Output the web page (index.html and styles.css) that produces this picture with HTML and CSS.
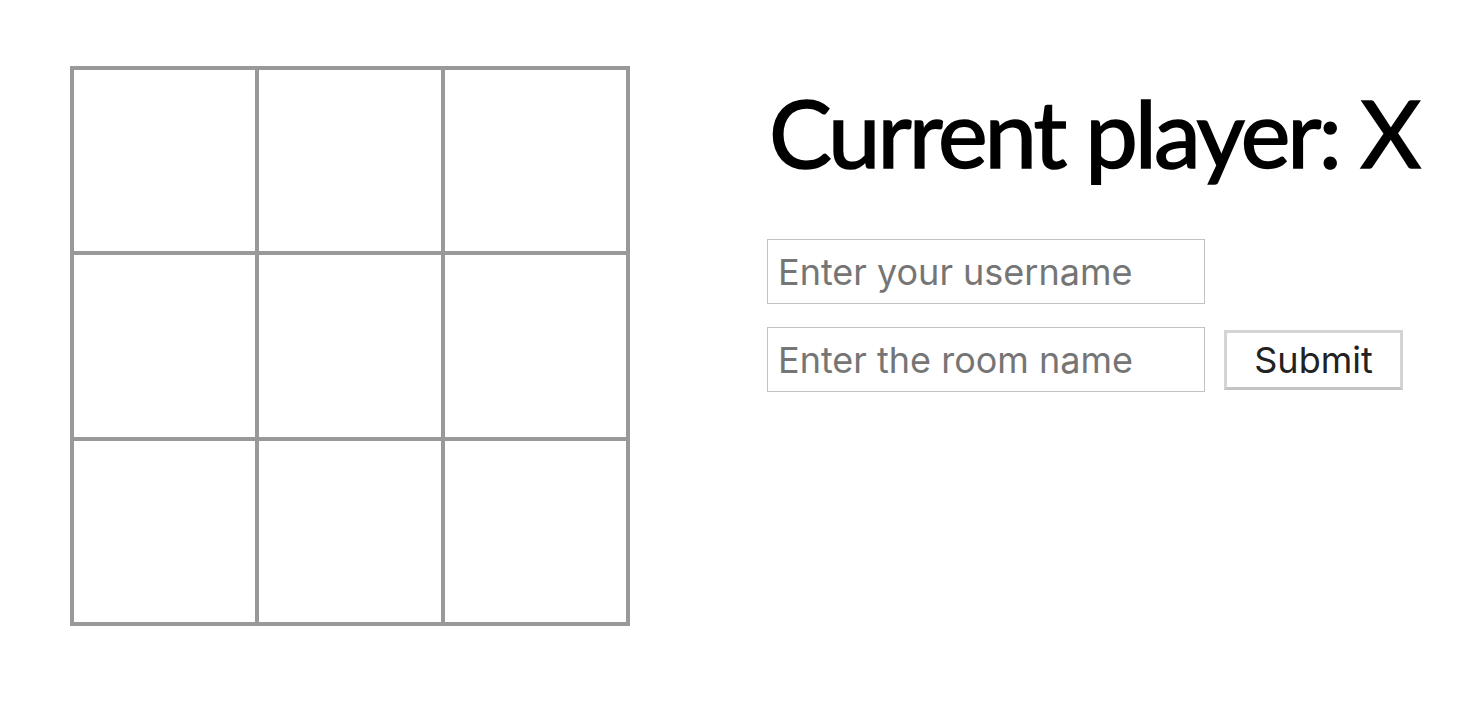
FILE: index.html
```html
<!DOCTYPE html>
<html>
<head>
<meta charset="utf-8">
<link rel="stylesheet" href="styles.css">
</head>
<body>
<div class="page">
  <div class="board">
    <div class="cell"></div><div class="cell"></div><div class="cell"></div>
    <div class="cell"></div><div class="cell"></div><div class="cell"></div>
    <div class="cell"></div><div class="cell"></div><div class="cell"></div>
  </div>
  <div class="side">
    <h1 class="title">Current player: X</h1>
    <form class="form">
      <div class="row"><input class="field" type="text" placeholder="Enter your username"></div>
      <div class="row"><input class="field" type="text" placeholder="Enter the room name"><button class="submit" type="button">Submit</button></div>
    </form>
  </div>
</div>
</body>
</html>
```
FILE: styles.css
```css
html, body { margin: 0; padding: 0; background: #fff; }
.page {
  display: flex;
  align-items: flex-start;
  padding: 66px 0 0 70px;
  gap: 137px;
}
.board {
  flex-shrink: 0;
  width: 560px;
  height: 560px;
  box-sizing: border-box;
  background: #999999;
  padding: 4px;
  display: grid;
  grid-template-columns: repeat(3, 1fr);
  grid-template-rows: repeat(3, 1fr);
  gap: 4px;
}
.cell { background: #fff; }
.side { display: flex; flex-direction: column; flex-shrink: 0; }
.title {
  margin: 11px 0 0 2px;
  font-family: "Lato", "DejaVu Sans", sans-serif;
  font-weight: 400;
  font-size: 94px;
  letter-spacing: -3px;
  line-height: 110px;
  white-space: nowrap;
  color: #000;
  -webkit-text-stroke: 1.6px #000;
}
.form { display: flex; flex-direction: column; gap: 23px; margin-top: 52px; }
.row { display: flex; align-items: center; gap: 19px; }
.field {
  box-sizing: border-box;
  width: 438px;
  height: 65px;
  border: 1px solid #c2c2c2;
  padding: 0 10px;
  font-family: "Inter", "Liberation Sans", sans-serif;
  font-size: 36px;
  color: #222;
  outline: none;
}
.field::placeholder { color: #757575; }
.submit {
  box-sizing: border-box;
  width: 179px;
  height: 60px;
  background: #fff;
  border: 3px solid #d4d4d4;
  border-bottom-color: #c4c4c4;
  font-family: "Inter", "Liberation Sans", sans-serif;
  font-size: 36px;
  color: #222;
  padding: 0;
}
```
